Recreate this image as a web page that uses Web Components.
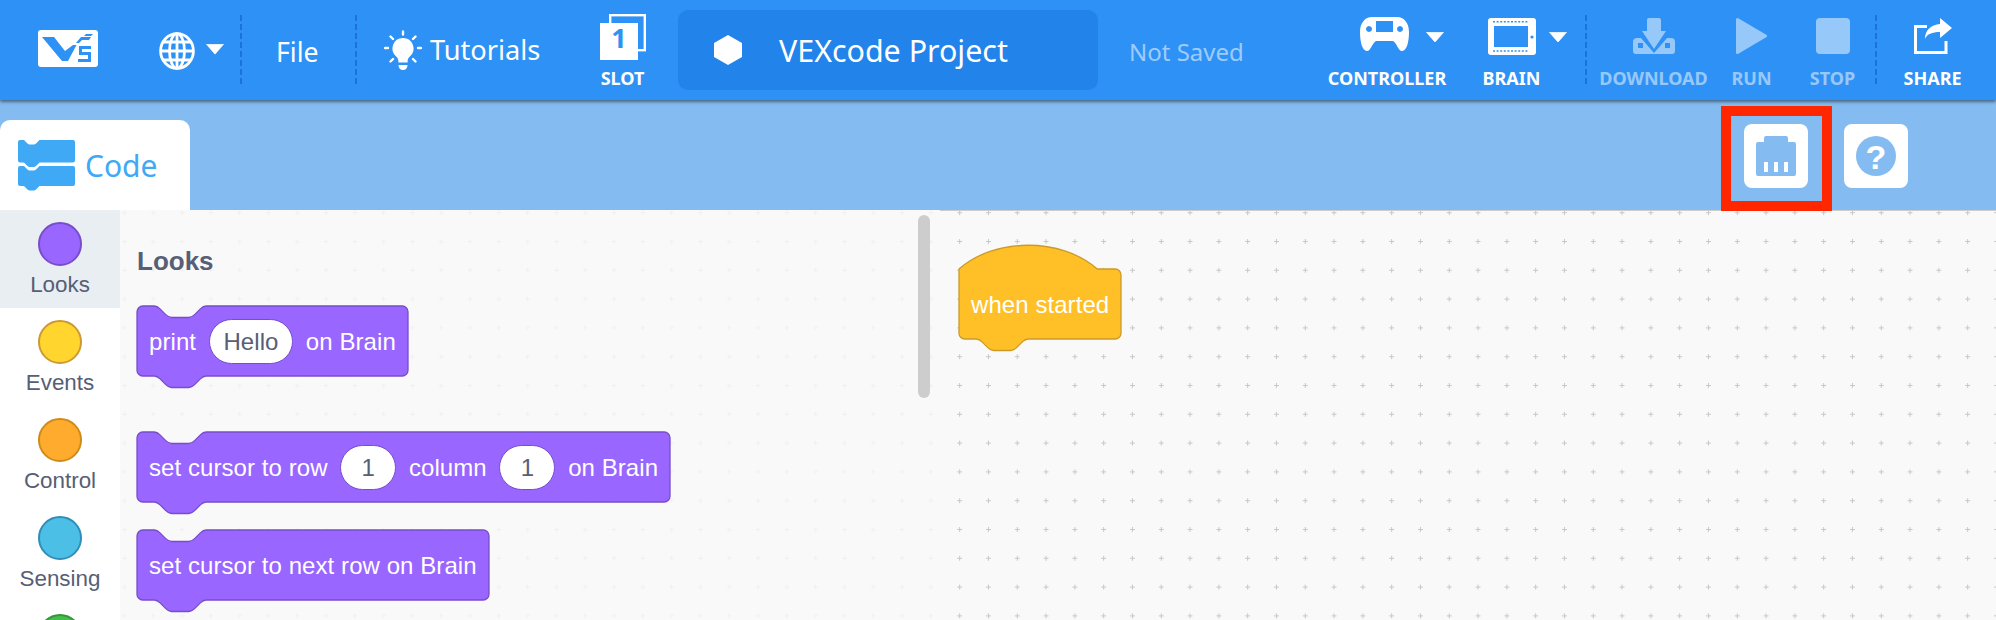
<!DOCTYPE html>
<html lang="en"><head><meta charset="utf-8"><title>VEXcode</title>
<style>
html,body{margin:0;padding:0;background:#f9f9f9}
body{width:1996px;height:620px;overflow:hidden;font-family:"Noto Sans",sans-serif}
svg{display:block;flex:none}
</style></head><body>
<vex-app>
  <vex-header slot="header">
    <vex-logo></vex-logo>
    <div style="display:flex;align-items:center;margin-left:61px;gap:11px;margin-top:1px">
      <svg width="36" height="38" viewBox="0 0 36 38" fill="none" stroke="#fff" stroke-width="2.8"><ellipse cx="18" cy="19" rx="16.4" ry="17.4"/><ellipse cx="18" cy="19" rx="7.5" ry="17.4"/><path d="M18 2V36M2 19H34M4.5 10H31.5M4.5 28H31.5"/></svg>
      <vex-caret style="margin-top:-3px"></vex-caret>
    </div>
    <vex-divider style="margin-left:16px"></vex-divider>
    <vex-text style="margin-left:34px;width:43px;font-size:26.6px;padding-top:4px">File</vex-text>
    <vex-divider style="margin-left:36px"></vex-divider>
    <svg style="margin-left:27px" width="38" height="40" viewBox="0 0 38 40" fill="#fff"><g stroke="#fff" stroke-width="2.4" stroke-linecap="round"><path d="M19 1.5V4.5M1 18H4M34 18H37M6.5 6.5L9 9M31.500 6.500L29 9M6.500 31.500L9 29M31.500 31.500L29 29"/></g><path d="M19 8a10.500 10.500 0 0 1 6.600 18.700c-1.300 1.100-2 2.800-2 4.800v1h-9.200v-1c0-2-.7-3.700-2-4.800A10.500 10.500 0 0 1 19 8Z"/><path d="M14.500 35h9c0 3-2 5-4.500 5s-4.500-2-4.500-5Z"/></svg>
    <vex-text style="margin-left:8px;width:111px;font-size:27.2px;margin-top:-1px">Tutorials</vex-text>
    <vex-tool label="SLOT" style="margin-left:60px;width:43px">
      <svg style="margin-top:-4px" width="46" height="46" viewBox="0 0 46 46"><rect x="10.200" y="1.200" width="34.600" height="35" fill="none" stroke="#fff" stroke-width="2.400"/><rect y="9" width="38" height="37" fill="#fff"/><text x="19" y="34" text-anchor="middle" font-family="'Noto Sans',sans-serif" font-weight="700" font-size="27" fill="#2e91f5">1</text></svg>
    </vex-tool>
    <vex-project style="margin-left:34px">VEXcode Project</vex-project>
    <vex-text style="margin-left:31px;width:115px;font-size:24px;padding-top:2px;color:rgba(255,255,255,.55)">Not Saved</vex-text>

    <vex-tool label="CONTROLLER" style="margin-left:84px;width:118px">
      <div style="display:flex;align-self:flex-start;margin-left:32px;margin-top:-1px;gap:17px">
        <svg width="49" height="34" viewBox="0 0 49 34"><path fill="#fff" fill-rule="evenodd" d="M12 0H37C44 0 49 6 49 15C49 24 47 34 42 34C38 34 37 26 33 24H16C12 26 11 34 7 34C2 34 0 24 0 15C0 6 5 0 12 0ZM16 4V15H33V4ZM9 9a3 3 0 1 0 .01 0ZM40 9a3 3 0 1 0 .01 0Z"/></svg>
        <vex-caret style="margin-top:14.500px"></vex-caret>
      </div>
    </vex-tool>
    <vex-tool label="BRAIN" style="margin-left:37px;width:57px">
      <div style="display:flex;align-self:flex-start;margin-left:5px;gap:13px">
        <svg width="48" height="37" viewBox="0 0 48 37"><rect width="48" height="37" rx="3" fill="#fff"/><rect x="6" y="8" width="34" height="21" fill="#2e91f5"/><path d="M5 3.800H41M5 33H41" stroke="#2e91f5" stroke-width="1.600" stroke-dasharray="2 1.600"/><circle cx="44" cy="19" r="1.600" fill="#2e91f5"/></svg>
        <vex-caret style="margin-top:13.500px"></vex-caret>
      </div>
    </vex-tool>
    <vex-divider style="margin-left:45px"></vex-divider>
    <vex-tool label="DOWNLOAD" disabled style="margin-left:12px;width:109px">
      <svg width="42" height="36" viewBox="0 0 42 36" fill="#fff"><path d="M16 0H26a2 2 0 0 1 2 2V13H33L21 31L9 13H14V2a2 2 0 0 1 2-2Z"/><path fill-rule="evenodd" d="M4 20H8L21 35L34 20H38a4 4 0 0 1 4 4V33a3 3 0 0 1-3 3H3a3 3 0 0 1-3-3V24a4 4 0 0 1 4-4ZM5 25V30H10V25ZM32 25V30H37V25Z"/></svg>
    </vex-tool>
    <vex-tool label="RUN" disabled style="margin-left:24px;width:39px">
      <svg width="31" height="36" viewBox="0 0 31 36"><path d="M1.500 1.500L29.500 18L1.500 34.500Z" fill="#fff" stroke="#fff" stroke-width="3" stroke-linejoin="round"/></svg>
    </vex-tool>
    <vex-tool label="STOP" disabled style="margin-left:39px;width:45px">
      <svg width="34" height="36" viewBox="0 0 34 36"><rect width="34" height="36" rx="4" fill="#fff"/></svg>
    </vex-tool>
    <vex-divider style="margin-left:20px"></vex-divider>
    <vex-tool label="SHARE" style="margin-left:27px;width:57px">
      <svg width="38" height="36" viewBox="0 0 38 36"><path d="M13 8.500H1.500V34.500H32V23" fill="none" stroke="#fff" stroke-width="3"/><path fill="#fff" d="M26 0L38 10L26 20V14C18 14 13 16 11 21C11 12 17 7 26 6Z"/></svg>
    </vex-tool>
  </vex-header>

  <vex-band slot="band">
    <vex-tab slot="tab">
      <svg width="57" height="51" viewBox="0 0 57 51" fill="#3fa9f5"><path d="M2 0H6L9 3C10 4 11 4.500 12.500 4.500H15C16.500 4.500 17.500 4 18.500 3L21.500 0H55a2 2 0 0 1 2 2V20.500a2 2 0 0 1-2 2H21.500L18.500 25.500C17.500 26.500 16.500 27 15 27H12.500C11 27 10 26.500 9 25.500L6 22.500H2a2 2 0 0 1-2-2V2a2 2 0 0 1 2-2Z"/><path d="M2 26H6L9 29C10 30 11 30.500 12.500 30.500H15C16.500 30.500 17.500 30 18.500 29L21.500 26H55a2 2 0 0 1 2 2V44a2 2 0 0 1-2 2H21.500L18.500 49C17.500 50 16.500 50.500 15 50.500H12.500C11 50.500 10 50 9 49L6 46H2a2 2 0 0 1-2-2V28a2 2 0 0 1 2-2Z"/></svg>
      Code
    </vex-tab>
    <vex-square slot="actions" marked>
      <svg width="40" height="40" viewBox="0 0 40 40"><path fill="#84bcf1" fill-rule="evenodd" d="M10 0H30a2 2 0 0 1 2 2V6H38a2 2 0 0 1 2 2V38a2 2 0 0 1-2 2H2a2 2 0 0 1-2-2V8a2 2 0 0 1 2-2H8V2a2 2 0 0 1 2-2ZM8 26V36H12V26ZM18 26V36H22V26ZM28 26V36H32V26Z"/></svg>
    </vex-square>
    <vex-square slot="actions">
      <svg width="40" height="40" viewBox="0 0 40 40"><circle cx="20" cy="20" r="20" fill="#84bcf1"/><text x="20" y="33" text-anchor="middle" font-family="'Liberation Sans',sans-serif" font-weight="700" font-size="34" fill="#fff">?</text></svg>
    </vex-square>
  </vex-band>

  <vex-categories slot="cats">
    <vex-cat active color="#9966ff" edge="#774dcb">Looks</vex-cat>
    <vex-cat color="#ffd52e" edge="#cc9933">Events</vex-cat>
    <vex-cat color="#ffab2d" edge="#cf8b17">Control</vex-cat>
    <vex-cat color="#4cbfe6" edge="#2e8eb8">Sensing</vex-cat>
    <vex-cat color="#40bf4a" edge="#389438"></vex-cat>
  </vex-categories>

  <vex-workspace slot="work">
    <vex-block slot="flyout" style="margin-bottom:56px">print <vex-pill>Hello</vex-pill> on Brain</vex-block>
    <vex-block slot="flyout" style="margin-bottom:28px">set cursor to row <vex-pill>1</vex-pill> column <vex-pill>1</vex-pill> on Brain</vex-block>
    <vex-block slot="flyout">set cursor to next row on Brain</vex-block>
    <vex-block hat slot="canvas" fill="#ffbf26" edge="#cc9a29" style="left:19px;top:58px">when started</vex-block>
  </vex-workspace>
</vex-app>
<script>
function el(name, css, html, extra){
  customElements.define(name, class extends HTMLElement{
    constructor(){super();this.attachShadow({mode:'open'}).innerHTML='<style>svg{display:block}'+css+'</style>'+html;}
    connectedCallback(){ if(extra) extra.call(this); }
  });
}
el('vex-app',':host{display:flex;flex-direction:column;width:1996px;height:620px;overflow:hidden}.main{display:flex;flex:1;min-height:0}',
 '<slot name="header"></slot><slot name="band"></slot><div class="main"><slot name="cats"></slot><slot name="work"></slot></div>');
el('vex-header',':host{display:flex;align-items:center;flex:none;height:100px;background:#2e91f5;color:#fff;box-shadow:0 2px 3px rgba(0,0,0,.45);position:relative;z-index:2}','<slot></slot>');
el('vex-logo',':host{display:block;flex:none;margin-left:38px;margin-top:-3px;width:60px;height:37px}',
 '<svg width="60" height="37" viewBox="0 0 60 37"><rect width="60" height="37" rx="3" fill="#fff"/><g fill="#2e91f5"><path d="M4 7H16L27 21L35 15H38.500L30 31H24Z"/><path d="M38 13L43 7H53L51 10H44L41 13ZM41 16H53V19H44V22H53V32H40V29H50V25H41Z"/><path d="M48 4H55L53 6H46Z"/></g></svg>');
el('vex-caret',':host{display:block;flex:none;width:18px;height:10px}','<svg width="18" height="10.500" viewBox="0 0 18 10.500"><path d="M.4 .3H17.600L9 10.200Z" fill="#fff" stroke="#fff" stroke-width=".6" stroke-linejoin="round"/></svg>');
el('vex-divider',':host{display:block;flex:none;width:2px;height:70px;background:repeating-linear-gradient(#1c72d6 0 6px,transparent 6px 9px)}','');
el('vex-text',':host{display:block;flex:none;white-space:nowrap;color:#fff}','<slot></slot>');
el('vex-tool',':host{display:flex;flex:none;flex-direction:column;align-items:center;height:100px;white-space:nowrap}.i{height:48px;margin-top:18px;display:flex;flex-direction:column;align-items:center;align-self:stretch}.l{font:700 18px/24px "Noto Sans",sans-serif;color:#fff}:host([disabled]) .i,:host([disabled]) .l{opacity:.5}',
 '<div class="i"><slot></slot></div><div class="l"></div>',function(){this.shadowRoot.querySelector('.l').textContent=this.getAttribute('label');});
el('vex-project',':host{display:flex;flex:none;align-items:center;box-sizing:border-box;width:420px;height:80px;background:#2283ea;border-radius:10px;padding-left:36px;color:#fff;font-size:30.4px;white-space:nowrap}span{margin-left:37px}',
 '<svg width="28" height="30" viewBox="0 0 28 30" style="flex:none;display:block"><path d="M14 0L28 8V22L14 30L0 22V8Z" fill="#fff"/></svg><span><slot></slot></span>');
el('vex-band',':host{display:flex;flex:none;height:110px;background:#84bcf1;justify-content:space-between;align-items:flex-start;padding-right:88px}.a{display:flex;gap:36px;padding-top:24px}',
 '<slot name="tab"></slot><div class="a"><slot name="actions"></slot></div>');
el('vex-tab',':host{display:flex;align-items:center;gap:10px;box-sizing:border-box;width:190px;height:90px;margin-top:20px;padding-left:18px;padding-top:1px;background:#fff;border-radius:10px 10px 0 0;color:#3fa9f5;font-size:30px}','<slot></slot>');
el('vex-square',':host{display:flex;align-items:center;justify-content:center;width:64px;height:64px;background:#fff;border-radius:8px;position:relative}.m{display:none;position:absolute;left:-23px;top:-18px;right:-24px;bottom:-23px;border:10px solid #ff2600;box-sizing:border-box;z-index:3}:host([marked]) .m{display:block}',
 '<slot></slot><div class="m"></div>');
el('vex-categories',':host{display:block;flex:none;width:120px;background:#fff;overflow:hidden}','<slot></slot>');
el('vex-cat',':host{display:flex;flex-direction:column;align-items:center;height:98px;box-sizing:border-box;padding-top:12px;font:22.4px/26px "Liberation Sans",sans-serif;color:#575e75}:host([active]){background:#e9eef2}.c{box-sizing:border-box;width:44px;height:44px;border-radius:50%;border:2px solid;margin-bottom:6px;flex:none}',
 '<div class="c"></div><slot></slot>',function(){const c=this.shadowRoot.querySelector('.c');c.style.background=this.getAttribute('color');c.style.borderColor=this.getAttribute('edge');});
el('vex-workspace',':host{display:flex;flex:1;min-width:0;position:relative;background:#f9f9f9;overflow:hidden}.grid{position:absolute;left:0;top:0}.fly{position:relative;box-sizing:border-box;width:820px;flex:none;background:rgba(249,249,249,.82);padding:36px 0 0 17px;display:flex;flex-direction:column;align-items:flex-start;z-index:1}h2{margin:0 0 30px 0;font:700 26px/30px "Liberation Sans",sans-serif;color:#575e75}.sb{position:absolute;left:798px;top:5px;width:12px;height:183px;border-radius:6px;background:#cdcdcd}.canvas{position:relative;flex:1;border-top:1px solid #ccc;margin-top:0}',
 '<svg class="grid" width="1876" height="410"><defs><pattern id="p" x="4.470" y="2.700" width="28.800" height="28.800" patternUnits="userSpaceOnUse" patternTransform="translate(-2.500 -2.500)"><path d="M2.500 0V5M0 2.500H5" stroke="#c8c8c8" stroke-width="1"/></pattern></defs><rect width="1876" height="410" fill="url(#p)"/></svg><div class="fly"><h2>Looks</h2><slot name="flyout"></slot><div class="sb"></div></div><div class="canvas"><slot name="canvas"></slot></div>');
el('vex-pill',':host{display:inline-flex;align-items:center;justify-content:center;box-sizing:border-box;min-width:56px;height:45px;padding:0 13.7px;background:#fff;border:1.500px solid #774dcb;border-radius:22.5px;color:#575e75;flex:none}','<slot></slot>');
const S=1.44;
function notch(dir){return dir>0?'c2,0 3,1 4,2 l4,4 c1,1 2,2 4,2 h12 c2,0 3,-1 4,-2 l4,-4 c1,-1 2,-2 4,-2':'c-2,0 -3,1 -4,2 l-4,4 c-1,1 -2,2 -4,2 h-12 c-2,0 -3,-1 -4,-2 l-4,-4 c-1,-1 -2,-2 -4,-2';}
el('vex-block',':host{display:inline-flex;flex:none;align-items:center;box-sizing:border-box;height:70px;padding:0 12px;position:relative;isolation:isolate;color:#fff;font:24px/1 "Liberation Sans",sans-serif;letter-spacing:.07px;white-space:nowrap}:host([hat]){position:absolute}svg{position:absolute;left:0;top:0;overflow:visible;z-index:-1}.t{position:relative;display:flex;align-items:center;gap:12.7px;padding-top:1px}',
 '<svg width="1" height="1"><path></path></svg><div class="t"><slot></slot></div>',function(){
  const W=this.offsetWidth/S, H=70/S, hat=this.hasAttribute('hat');
  const top=hat?'M0,0 c25,-22 71,-22 96,0 H'+(W-4)+' a4,4 0 0 1 4,4':'M0,4 a4,4 0 0 1 4,-4 h8 '+notch(1)+' H'+(W-4)+' a4,4 0 0 1 4,4';
  const bottom=' V'+(H-4)+' a4,4 0 0 1 -4,4 H48 '+notch(-1)+' h-8 a4,4 0 0 1 -4,-4 Z';
  const p=this.shadowRoot.querySelector('path');
  p.setAttribute('d',top+bottom);
  p.setAttribute('transform','scale('+S+')');
  p.setAttribute('fill',this.getAttribute('fill')||'#9966ff');
  p.setAttribute('stroke',this.getAttribute('edge')||'#774dcb');
  p.setAttribute('stroke-width',1/S*1.3);
});
</script>
</body></html>
